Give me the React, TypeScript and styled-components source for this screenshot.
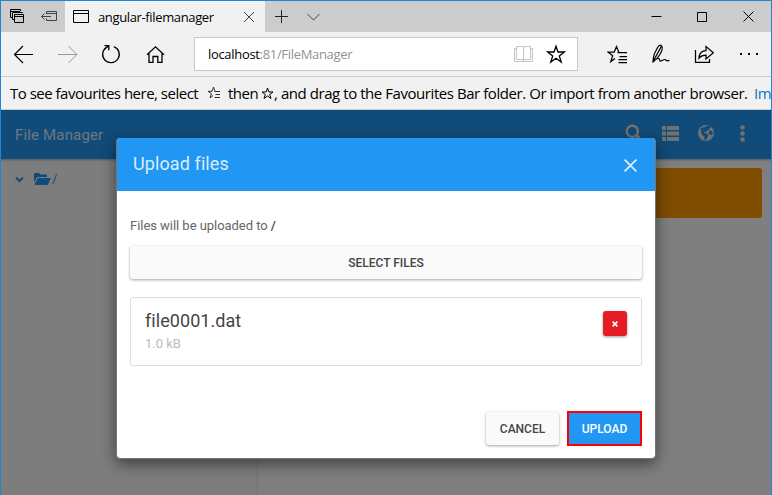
import React from 'react';
import styled, { createGlobalStyle } from 'styled-components';

const Global = createGlobalStyle`
  * { box-sizing: border-box; }
  body { margin: 0; background: #f1f1f1; }
  svg { flex: none; }
  button { font: inherit; border: 0; margin: 0; padding: 0; }
`;

const Window = styled.div`
  width: 772px;
  height: 495px;
  overflow: hidden;
  display: flex;
  flex-direction: column;
  border: 1px solid #2085d3;
  border-bottom: 0;
  background: #f1f1f1;
  font-family: 'Open Sans', 'Noto Sans', sans-serif;
  color: #000;
`;

const TabStrip = styled.div`
  height: 31px;
  flex: none;
  display: flex;
  background: #ccc;
`;

const TabTools = styled.div`
  width: 64px;
  display: flex;
  align-items: center;
  padding: 0 0 1px 8px;
  gap: 15px;
`;

const Tab = styled.div`
  width: 200px;
  display: flex;
  align-items: center;
  background: #f1f1f1;
  padding-left: 8px;
`;

const TabTitle = styled.span`
  margin-left: 9px;
  width: 145px;
  font-size: 13px;
  line-height: 20px;
  white-space: nowrap;
  letter-spacing: -0.36px;
`;

const StripActions = styled.div`
  flex: 1;
  display: flex;
  align-items: center;
  padding-left: 9px;
  gap: 17px;
`;

const WindowControls = styled.div`
  display: flex;
  width: 138px;
`;

const Control = styled.div`
  width: 46px;
  display: grid;
  place-items: center;
`;

const Toolbar = styled.div`
  height: 45px;
  flex: none;
  display: flex;
  align-items: center;
  border-bottom: 1px solid #ccc;
`;

const NavGroup = styled.div`
  width: 193px;
  display: flex;
  padding-left: 12px;
  gap: 22px;
`;

const Address = styled.div`
  width: 384px;
  height: 34px;
  display: flex;
  align-items: center;
  border: 1px solid #c8c8c8;
  background: #fff;
  padding-left: 13px;
`;

const Url = styled.div`
  width: 305px;
  font-size: 13px;
  line-height: 20px;
  letter-spacing: -0.32px;
  white-space: nowrap;
  color: #929292;
  b { font-weight: 400; color: #000; }
`;

const AddressIcons = styled.div`
  display: flex;
  gap: 12px;
`;

const ActionGroup = styled.div`
  display: flex;
  padding-left: 29px;
  gap: 23px;
`;

const Favourites = styled.div`
  height: 33px;
  flex: none;
  display: flex;
  align-items: center;
  overflow: hidden;
  padding-left: 9px;
  border-bottom: 1px solid #d2d0cc;
  font-size: 15px;
  line-height: 22px;
  white-space: nowrap;
`;

const Phrase = styled.span<{ $w: number; $track: number; $indent?: number; $link?: boolean }>`
  flex: none;
  width: ${p => p.$w}px;
  padding-left: ${p => p.$indent ?? 0}px;
  letter-spacing: ${p => p.$track}px;
  color: ${p => (p.$link ? '#1070c4' : '#000')};
`;

const Page = styled.div`
  position: relative;
  flex: 1;
  display: flex;
  flex-direction: column;
  background: #fff;
  font-family: Roboto, sans-serif;
`;

const AppBar = styled.header`
  height: 49px;
  flex: none;
  display: flex;
  align-items: center;
  justify-content: space-between;
  padding: 0 20px 3px 14px;
  background: #2196f3;
  box-shadow: 0 1px 2px rgba(0, 0, 0, 0.3);
  color: #fff;
  z-index: 1;
`;

const Brand = styled.span`
  font-size: 15px;
  line-height: 20px;
  letter-spacing: 0.16px;
  padding-top: 3px;
  color: rgba(255, 255, 255, 0.84);
`;

const BarIcons = styled.div`
  display: flex;
  align-items: center;
  gap: 18px;
  color: #e2e2e2;
`;

const Columns = styled.div`
  flex: 1;
  display: flex;
`;

const Sidebar = styled.aside`
  width: 257px;
  border-right: 1px solid #e8e8e8;
  background: #fafafa;
  padding: 12px 0 0 14px;
`;

const RootFolder = styled.div`
  display: flex;
  align-items: center;
  font-size: 13px;
  line-height: 15px;
  color: #2196f3;
  svg:first-child { margin-right: 10px; }
  span { margin-left: 1px; }
`;

const Main = styled.main`
  flex: 1;
  padding: 9px 9px 0 10px;
`;

const Alert = styled.div`
  height: 50px;
  border-radius: 3px;
  background: #ff9800;
`;

const Backdrop = styled.div`
  position: absolute;
  inset: 0;
  z-index: 2;
  display: flex;
  align-items: flex-start;
  padding: 28px 0 0 115px;
  background: rgba(0, 0, 0, 0.5);
`;

const Dialog = styled.section`
  width: 540px;
  height: 321px;
  display: flex;
  flex-direction: column;
  overflow: hidden;
  border: 1px solid #777;
  border-top: 0;
  border-radius: 4px;
  background: #fff;
  background-clip: padding-box;
  box-shadow: 0 5px 15px rgba(0, 0, 0, 0.5);
`;

const DialogHeader = styled.div`
  height: 53px;
  flex: none;
  display: flex;
  align-items: center;
  justify-content: space-between;
  padding: 0 18px 0 16px;
  background: #2196f3;
  color: #d9edfd;
  font-size: 18px;
  line-height: 24px;
  letter-spacing: 0.1px;
  span { margin-top: -1px; }
  svg { margin-top: 2px; }
`;

const DialogBody = styled.div`
  flex: 1;
  padding: 26px 13px 0;
`;

const Hint = styled.p`
  margin: 0;
  font-size: 13px;
  line-height: 18px;
  letter-spacing: -0.04px;
  color: #666;
  b { font-weight: 500; color: #444; }
`;

const Button = styled.button<{ $kind?: 'primary' | 'wide' }>`
  height: ${p => (p.$kind === 'primary' ? 35 : 33)}px;
  width: ${p => (p.$kind === 'wide' ? '100%' : p.$kind === 'primary' ? '75px' : '73px')};
  margin-top: ${p => (p.$kind === 'wide' ? 11 : 0)}px;
  border-radius: ${p => (p.$kind === 'primary' ? 0 : 3)}px;
  border: ${p => (p.$kind === 'primary' ? '2px solid #f00' : '0')};
  background: ${p => (p.$kind === 'primary' ? '#2196f3' : '#fafafa')};
  color: ${p => (p.$kind === 'primary' ? '#fff' : '#444')};
  box-shadow: ${p => (p.$kind === 'primary' ? 'none' : '0 1px 3px rgba(0, 0, 0, 0.36)')};
  font-size: 12px;
  font-weight: 500;
  line-height: 16px;
`;

const FileCard = styled.div`
  height: 69px;
  margin-top: 18px;
  display: flex;
  justify-content: space-between;
  align-items: flex-start;
  border: 1px solid #ddd;
  border-radius: 3px;
  padding: 12px 14px 0;
`;

const FileName = styled.div`
  font-size: 18px;
  line-height: 22px;
  letter-spacing: 0.06px;
  color: #444;
`;

const FileSize = styled.div`
  margin-top: 3px;
  font-size: 13px;
  line-height: 18px;
  color: #bbb;
`;

const Remove = styled.button`
  width: 24px;
  height: 25px;
  margin-top: 1px;
  display: grid;
  place-items: center;
  border-radius: 3px;
  background: #e51c23;
  box-shadow: 0 1px 3px rgba(0, 0, 0, 0.4);
`;

const DialogFooter = styled.div`
  flex: none;
  display: flex;
  justify-content: flex-end;
  align-items: center;
  gap: 8px;
  padding: 0 13px 12px;
`;

type GlyphProps = { w: number; h: number; color?: string; sw?: number; children: React.ReactNode };
const Glyph = ({ w, h, color = '#000', sw = 1, children }: GlyphProps) => (
  <svg width={w} height={h} viewBox={`0 0 ${w} ${h}`} fill="none" stroke={color} strokeWidth={sw}>
    {children}
  </svg>
);

const starPath = 'M10 2.2 12 8H18.3L13.3 11.9 15.2 18 10 14.3 4.8 18 6.7 11.9 1.7 8H8Z';

export default function App() {
  return (
    <>
      <Global />
      <Window>
        <TabStrip>
          <TabTools>
            <Glyph w={16} h={16}>
              <path d="M1.5 9.5V1.5H11.5V3M1.5 3.5H11M1.5 9.5H3M3.5 11.5V4.5H13.5V5M5.5 6.5H14.5V14.5H5.5ZM5.5 8.5H14.5M3.5 11.5H5" />
            </Glyph>
            <Glyph w={18} h={14} color="#444">
              <path d="M6.5 5V2.5H16.5V11.5H6.5V9.5M6.5 4.5H16.5M1.5 7.5H11M4.5 4.5 1.5 7.5 4.5 10.5" />
            </Glyph>
          </TabTools>
          <Tab>
            <Glyph w={16} h={14}>
              <path d="M.5.5H15.5V12.5H.5ZM.5 3.5H15.5" />
            </Glyph>
            <TabTitle>angular-filemanager</TabTitle>
            <Glyph w={12} h={12} color="#444">
              <path d="M1 1 11 11M11 1 1 11" />
            </Glyph>
          </Tab>
          <StripActions>
            <Glyph w={15} h={15} color="#222">
              <path d="M1 7.5H14M7.5 1V14" />
            </Glyph>
            <Glyph w={15} h={10} color="#444">
              <path d="M1.5 2 7.5 8 13.5 2" />
            </Glyph>
          </StripActions>
          <WindowControls>
            <Control>
              <Glyph w={11} h={11}><path d="M.5 5.5H10.5" /></Glyph>
            </Control>
            <Control>
              <Glyph w={10} h={10}><path d="M.5.5H9.5V9.5H.5Z" /></Glyph>
            </Control>
            <Control>
              <Glyph w={11} h={11}><path d="M.5.5 10.5 10.5M10.5.5.5 10.5" /></Glyph>
            </Control>
          </WindowControls>
        </TabStrip>

        <Toolbar>
          <NavGroup>
            <Glyph w={22} h={20} sw={1.2}>
              <path d="M20 10.5H2M10 2 1.5 10.5 10 19" />
            </Glyph>
            <Glyph w={22} h={20} color="#999">
              <path d="M1 10.5H20M11.5 2 20 10.5 11.5 19" />
            </Glyph>
            <Glyph w={22} h={20} sw={1.3}>
              <path d="M12.8 2.6A8.300 8.300 0 1 1 5.200 3.600L7.500 2.300M3.500 1.700H7.800V6.300" />
            </Glyph>
            <Glyph w={22} h={20} sw={1.3}>
              <path d="M2 10.800 10.500 2.800 19 10.800M4 9.500V18.300H8V12.500H12.800V18.300H17V9.500" />
            </Glyph>
          </NavGroup>
          <Address>
            <Url><b>localhost</b>:81/FileManager</Url>
            <AddressIcons>
              <Glyph w={21} h={20} color="#c4c4c4">
                <path d="M3.5 2.5H9Q10.5 2.5 10.5 4Q10.5 2.5 12 2.5H17.5V15.5H12Q10.5 15.5 10.5 17Q10.5 15.5 9 15.5H3.5ZM10.5 4V17M3 4.5H1.5V17.5H19.5V4.5H18" />
              </Glyph>
              <Glyph w={20} h={20} sw={1.3}><path d={starPath} /></Glyph>
            </AddressIcons>
          </Address>
          <ActionGroup>
            <Glyph w={20} h={20} sw={1.25}>
              <path d="M8 14.4 3.8 17.6 5.7 11.7 1 8H7.2L9.5 2.5 11.8 8M10.5 8.5H20M12.5 12.5H20M11.5 15.5H20M11.5 18.5H20" />
            </Glyph>
            <Glyph w={20} h={20} sw={1.2}>
              <path transform="translate(1 0)" d="M2 17.8 9.8 3.4Q10.8 1.2 9.3 1.2 8 1.2 6.6 3.5L3.5 9.5Q2.2 12.8 2 17.8Q7 14.5 9.5 9.5L11 6Q12 3.2 10.5 1.8M2 18Q8 12 8.5 15.8C8.7 19 12 15.4 13.8 15.5S15 18 18.5 16.3" />
            </Glyph>
            <Glyph w={21} h={20} sw={1.25}>
              <path d="M2.500 6V18.3H16.5V15M6 14Q6.500 6.500 13 6.500V2.500L20.400 8.700 13 15V11Q8.500 11 6 14Z" />
            </Glyph>
            <Glyph w={21} h={20} color="none">
              <g fill="#000">
                <rect x="3" y="9" width="2" height="2" />
                <rect x="11" y="9" width="2" height="2" />
                <rect x="19" y="9" width="2" height="2" />
              </g>
            </Glyph>
          </ActionGroup>
        </Toolbar>

        <Favourites>
          <Phrase $w={197} $track={-0.5}>To see favourites here, select</Phrase>
          <Glyph w={14} h={14} color="#333">
            <path d="M6 9.5 3 12 4.4 7.8 1 5.3H5L6.5 1 8 5.3M7.5 5.5H13M8.5 8.5H13M7.5 11.5H13" />
          </Glyph>
          <Phrase $w={40} $track={-0.5} $indent={7}>then</Phrase>
          <Glyph w={13} h={13}>
            <path d="M6.5 1 7.9 5H12L8.7 7.5 10 11.5 6.5 9 3 11.5 4.3 7.5 1 5H5.1Z" />
          </Glyph>
          <Phrase $w={480} $track={-0.44}>, and drag to the Favourites Bar folder. Or import from another browser.</Phrase>
          <Phrase $w={17} $track={-0.5} $link>Im</Phrase>
        </Favourites>

        <Page>
          <AppBar>
            <Brand>File Manager</Brand>
            <BarIcons>
              <svg width="18" height="18" viewBox="0 0 18 18" fill="none" stroke="currentColor">
                <circle cx="7.3" cy="7.3" r="5.600" strokeWidth="2.4" />
                <path d="m11 11 5.500 5.500" strokeWidth="3" />
              </svg>
              <svg width="18" height="18" viewBox="0 0 18 18" fill="currentColor">
                <path d="M1 2h4v4H1zM6 2h12v4H6zM1 7.500h4v4H1zM6 7.500h12v4H6zM1 13h4v4H1zM6 13h12v4H6z" />
              </svg>
              <svg width="18" height="18" viewBox="0 0 18 18">
                <circle cx="9" cy="9" r="8" fill="currentColor" />
                <path fill="#2196f3" d="m9 2 4-.2 1 1.8-2 .8.3 1.600-2.300.5L9.500 8 8 7.500 7 9l2.500.5 2 1.500-1 2.500-2 2.800-1.300-.5.3-3.300-2-1.300L4 8.500l.5-2L3 6l2-2.700 2.500.2Zm3.500 4.500 2.500.5 1 2-1.500 2-2-.5-1-2Z" />
              </svg>
              <svg width="18" height="18" viewBox="0 0 18 18" fill="currentColor">
                <circle cx="9.500" cy="3.500" r="2.300" />
                <circle cx="9.500" cy="9.500" r="2.300" />
                <circle cx="9.500" cy="15.500" r="2.300" />
              </svg>
            </BarIcons>
          </AppBar>
          <Columns>
            <Sidebar>
              <RootFolder>
                <svg width="9" height="8" viewBox="0 0 9 8" fill="none" stroke="currentColor" strokeWidth="2">
                  <path d="m1 2.500 3.500 3.500L8 2.500" />
                </svg>
                <svg width="17" height="14" viewBox="0 0 17 14" fill="currentColor">
                  <path d="M0 11V2q0-1 1-1h4l1.500 1.500H12q1 0 1 1V5H4Q3 5 2.500 6ZM.3 13 3.500 6.600Q3.800 6 4.500 6H16q1 0 .6.800L14 12.200q-.4.800-1.400.8Z" />
                </svg>
                <span>/</span>
              </RootFolder>
            </Sidebar>
            <Main>
              <Alert />
            </Main>
          </Columns>

          <Backdrop>
            <Dialog role="dialog" aria-label="Upload files">
              <DialogHeader>
                <span>Upload files</span>
                <Glyph w={13} h={13} color="#d9edfd" sw={1.8}>
                  <path d="M.6.6 12.400 12.400M12.400.6.6 12.400" />
                </Glyph>
              </DialogHeader>
              <DialogBody>
                <Hint>Files will be uploaded to <b>/</b></Hint>
                <Button $kind="wide">SELECT FILES</Button>
                <FileCard>
                  <div>
                    <FileName>file0001.dat</FileName>
                    <FileSize>1.0 kB</FileSize>
                  </div>
                  <Remove aria-label="Remove">
                    <Glyph w={6} h={6} color="#fff" sw={1.6}>
                      <path d="M.6.6 5.400 5.400M5.400.6.6 5.400" />
                    </Glyph>
                  </Remove>
                </FileCard>
              </DialogBody>
              <DialogFooter>
                <Button>CANCEL</Button>
                <Button $kind="primary">UPLOAD</Button>
              </DialogFooter>
            </Dialog>
          </Backdrop>
        </Page>
      </Window>
    </>
  );
}
